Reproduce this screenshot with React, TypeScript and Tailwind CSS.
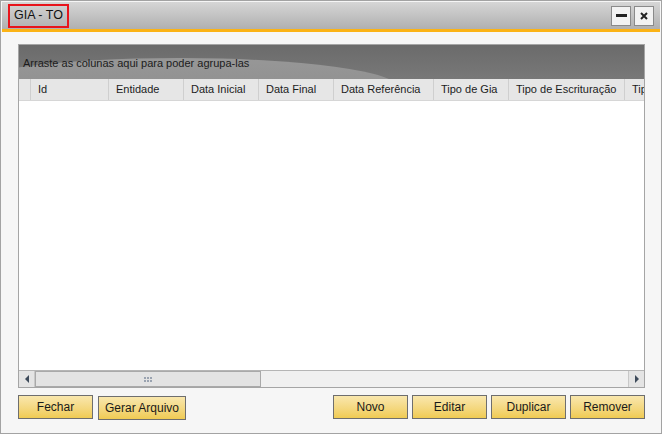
import React from 'react';

const columns = [
  { label: 'Id', w: 78 },
  { label: 'Entidade', w: 75 },
  { label: 'Data Inicial', w: 75 },
  { label: 'Data Final', w: 75 },
  { label: 'Data Referência', w: 100 },
  { label: 'Tipo de Gia', w: 75 },
  { label: 'Tipo de Escrituração', w: 116 },
  { label: 'Tipo', w: 60 },
];

function YellowButton({ label, width }: { label: string; width: string }) {
  return (
    <button
      className={`h-[24px] ${width} border border-[#6e6e6e] bg-gradient-to-b from-[#f9e7ad] to-[#f0cb52] text-[12px] text-[#1a1a1a] leading-none whitespace-nowrap`}
    >
      {label}
    </button>
  );
}

export default function App() {
  return (
    <div
      className="w-[662px] h-[434px] bg-[#f6f6f6] border border-[#a3a3a3] flex flex-col overflow-hidden"
      style={{ fontFamily: '"Liberation Sans", Arial, sans-serif' }}
    >
      {/* title bar */}
      <div className="mx-[1px] mt-[1px] h-[27px] flex items-center justify-between bg-gradient-to-b from-[#d6d6d6] to-[#b0b0b0] pl-[6px] pr-[6px]">
        <div className="h-[24px] px-[4px] border-2 border-[#e8141c] flex items-center text-[12.5px] text-[#111]">
          GIA - TO
        </div>
        <div className="flex gap-[3px]">
          <div className="w-[20px] h-[20px] border border-[#8a8a8a] bg-[#f2f2f2] flex items-center justify-center">
            <div className="w-[11px] h-[3px] bg-[#222]" />
          </div>
          <div className="w-[20px] h-[20px] border border-[#8a8a8a] bg-[#f2f2f2] flex items-center justify-center">
            <svg width="10" height="10" viewBox="0 0 10 10">
              <path d="M2 2 L8 8 M8 2 L2 8" stroke="#222" strokeWidth="2" />
            </svg>
          </div>
        </div>
      </div>
      <div className="mx-[1px] h-[3px] bg-[#fbb316]" />

      {/* grid */}
      <div className="mt-[12px] ml-[17px] mr-[16px] h-[344px] border border-[#a5a5a5] bg-white flex flex-col">
        <div className="relative h-[34px] overflow-hidden bg-gradient-to-b from-[#6b6b6b] to-[#787878]">
          <div className="absolute left-[-60px] top-[13px] w-[440px] h-[60px] rounded-[50%] bg-gradient-to-b from-[#979797] to-[#8a8a8a]" />
          <div className="absolute left-[4px] top-[10px] text-[11px] text-[#1c1c1c]">
            Arraste as colunas aqui para poder agrupa-las
          </div>
        </div>
        <div className="flex h-[22px] bg-[#e6e6e6] border-b border-[#d6d6d6] overflow-hidden">
          <div className="w-[12px] shrink-0 border-r border-[#cfcfcf]" />
          {columns.map((c) => (
            <div
              key={c.label}
              style={{ width: c.w }}
              className="shrink-0 border-r border-[#cfcfcf] pl-[7px] flex items-center text-[11px] text-[#1c1c1c] whitespace-nowrap"
            >
              {c.label}
            </div>
          ))}
        </div>
        <div className="flex-1 bg-white" />
        <div className="h-[17px] flex bg-[#f0f0f0] border-t border-[#b5b5b5]">
          <div className="w-[16px] flex items-center justify-center bg-[#e4e4e4] border-r border-[#c8c8c8]">
            <div className="w-0 h-0 border-y-[4px] border-y-transparent border-r-[4px] border-r-[#3d4a5a]" />
          </div>
          <div className="w-[226px] border border-[#a9a9a9] bg-[#e3e3e3] flex items-center justify-center">
            <div className="grid grid-cols-3 gap-[1px]">
              {Array.from({ length: 6 }).map((_, i) => (
                <div key={i} className="w-[2px] h-[2px] bg-[#9aa3b0]" />
              ))}
            </div>
          </div>
          <div className="flex-1" />
          <div className="w-[16px] flex items-center justify-center bg-[#e4e4e4] border-l border-[#c8c8c8]">
            <div className="w-0 h-0 border-y-[4px] border-y-transparent border-l-[4px] border-l-[#3d4a5a]" />
          </div>
        </div>
      </div>

      {/* buttons */}
      <div className="mt-[7px] ml-[17px] mr-[16px] flex">
        <YellowButton label="Fechar" width="w-[75px]" />
        <div className="ml-[5px]">
          <YellowButton label="Gerar Arquivo" width="w-[88px]" />
        </div>
        <div className="flex-1" />
        <div className="flex gap-[4px]">
          <YellowButton label="Novo" width="w-[75px]" />
          <YellowButton label="Editar" width="w-[75px]" />
          <YellowButton label="Duplicar" width="w-[75px]" />
          <YellowButton label="Remover" width="w-[75px]" />
        </div>
      </div>
    </div>
  );
}
